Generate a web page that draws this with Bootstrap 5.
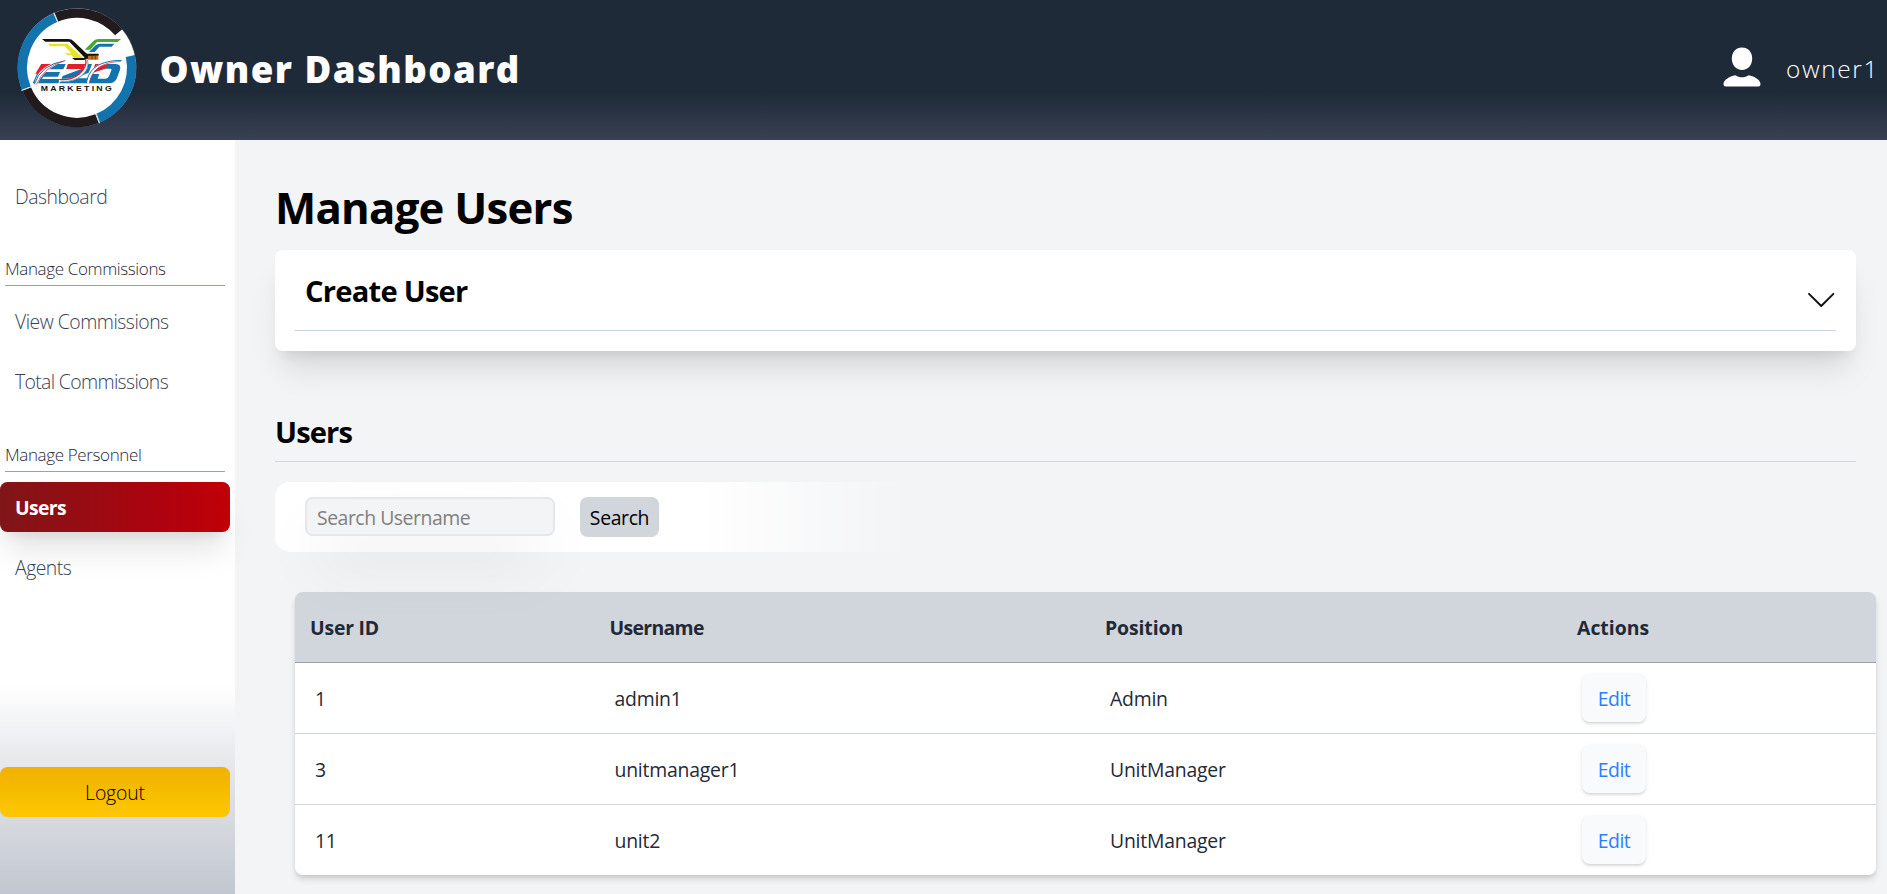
<!DOCTYPE html>
<html lang="en">
<head>
<meta charset="utf-8">
<meta name="viewport" content="width=device-width, initial-scale=1">
<title>Owner Dashboard</title>
<link href="https://cdn.jsdelivr.net/npm/bootstrap@5.3.0/dist/css/bootstrap.min.css" rel="stylesheet">
<style>
body{font-family:"Open Sans","Noto Sans",sans-serif;font-size:19.4px;letter-spacing:-.4px;background:#f3f4f6;color:#1f2937;height:100vh;overflow:hidden}
h1,h2,p{margin:0}
.topbar{height:140px;background:linear-gradient(#1f2a39 0,#1f2a39 66%,#374151 100%)}
.brand-title{font-weight:800;font-size:36.6px;letter-spacing:1.45px;line-height:54px;margin-top:-2px;margin-left:-.5px}
.user-name{font-weight:300;font-size:24.4px;letter-spacing:1.65px;margin-top:-1px}
.user-box{padding-right:8px;gap:25px}
.user-box svg{margin-top:-5px}
.sidebar{width:235px;height:754px;padding:31px 5px 0 0;background:linear-gradient(#fff 0,#fff 545px,#e5e7eb 625px,#d1d5db 700px,#c2c6d0 754px)}
.side-item{height:50px;padding:2px 0 0 15px;border-radius:7.5px;font-weight:300;letter-spacing:-.5px;color:#374151;text-decoration:none;display:flex;align-items:center;flex:none}
.side-item.on{font-weight:700;color:#fff;letter-spacing:-.65px;background:linear-gradient(90deg,#7f1618 0,#ae020e 70%,#c10007 100%);box-shadow:0 25px 31px -6px rgba(0,0,0,.1),0 10px 12.5px -7.5px rgba(0,0,0,.1)}
.side-item.tight{letter-spacing:-.65px}
.side-item+.side-item{margin-top:10px}
.side-head{height:65px;margin:0 5px 10px;border-bottom:1px solid #99a1af;font-weight:300;font-size:17px;line-height:33px;letter-spacing:-.37px;color:#1f2937}
.side-head.second{height:66px}
.logout{margin-top:175px;padding:2px 0 0;height:50px;border:0;border-radius:7.5px;background:linear-gradient(#f0b100,#fdc700);font-weight:300;letter-spacing:-.15px;color:#000}
.main-area{padding:35px 31px 0 40px;min-width:0}
.page-title{font-size:43.7px;font-weight:700;line-height:64px;letter-spacing:-.75px;color:#000;margin-bottom:11px}
.sub-title{font-size:29.1px;font-weight:700;line-height:43px;letter-spacing:-.85px;color:#000}
.create-card{height:101px;border-radius:7.5px;padding:20px;background:#fff;box-shadow:0 25px 31px -6px rgba(0,0,0,.1),0 10px 12.5px -7.5px rgba(0,0,0,.1)}
.create-head{height:61px;border-bottom:1px solid #cad5e2;padding-left:10px}
.create-head .sub-title{letter-spacing:-.75px}
.chev{margin-top:15px}
.users-head{margin-top:60px;height:51px;border-bottom:1px solid #d1d5dc}
.search-row{margin-top:20px;height:70px;border-radius:15px;padding:15px 0 0 30px;background:linear-gradient(90deg,#fff 0,#fff 27%,rgba(255,255,255,0) 40%);gap:25px}
.search-box{width:250px;height:39px;border:2px solid #e5e7eb;border-radius:7.5px;background:#f3f4f6;padding:2px 10px 0;font-size:19.4px;letter-spacing:-.47px;box-shadow:0 31px 62px -15px rgba(0,0,0,.25)}
.search-box::placeholder{color:#808080;opacity:1}
.search-btn{width:79px;height:40px;border:0;border-radius:7.5px;background:#d1d5dc;color:#000;padding:2px 0 0;letter-spacing:-.35px}
.user-panel{margin:40px -20px 0 20px;border-radius:7.5px;overflow:hidden;background:#fff;box-shadow:0 5px 7.5px -1.25px rgba(0,0,0,.14),0 2.5px 5px -2.5px rgba(0,0,0,.14)}
.user-table{width:100%;table-layout:fixed;border-collapse:separate;border-spacing:0}
.user-table th{height:71px;background:#d1d5dc;border-bottom:1px solid #99a1af;padding:2px 15px 0;font-weight:700;letter-spacing:-.2px}
.user-table th:nth-child(2){letter-spacing:-.65px}
.user-table th:nth-child(3){letter-spacing:-.1px}
.user-table th:nth-child(4){letter-spacing:0}
.user-table td{height:71px;border-bottom:1px solid #d1d5dc;padding:2px 20px 0;letter-spacing:-.22px}
.user-table td:last-child{padding-top:0}
.user-table tr:last-child td{height:70px;border-bottom:0}
.edit-btn{width:64px;height:48px;border:0;border-radius:7.5px;background:#f9fafb;color:#2b7fff;padding:2px 0 0;letter-spacing:-.45px;box-shadow:0 1.25px 3.75px rgba(0,0,0,.1),0 1.25px 2.5px -1px rgba(0,0,0,.1)}
</style>
</head>
<body>
<header class="topbar d-flex align-items-center justify-content-between">
  <div class="d-flex align-items-center">
    <svg width="160" height="140" viewBox="0 0 480 420" class="flex-shrink-0" aria-hidden="true">
      <circle cx="231" cy="203" r="178" fill="#8a8d92"/>
      <circle cx="231" cy="203" r="176.500" fill="#fff"/>
      <g fill="none" stroke-width="28">
        <path d="M168 52A164 164 0 0 1 356 97" stroke="#211b1e"/>
        <path d="M391 168A164 164 0 0 1 293 355" stroke="#1273ae"/>
        <path d="M291 356A164 164 0 0 1 80 267" stroke="#211b1e"/>
        <path d="M79 265A164 164 0 0 1 166 53" stroke="#1273ae"/>
      </g>
      <path d="M162 38L174 66M64 271L93 261M299 370L289 341" stroke="#ddd" stroke-width="3"/>
      <path d="M126 117H205Q215 117 221 124L262 163L257 176L208 125H136Z" fill="#15120d"/>
      <path d="M144 131H202L250 174H222L214 166H202L195 160H214L194 139H150Z" fill="#e7e326"/>
      <path d="M216 174H262V180H224Z" fill="#15120d"/>
      <path d="M363 117H296Q286 117 280 123L254 149H271L291 126H353Z" fill="#43aa36"/>
      <path d="M343 131H300Q292 131 287 136L267 156H284L298 140H335Z" fill="#1273ae"/>
      <path d="M254 161H296V167L266 169V178H254Z" fill="#15120d"/>
      <path d="M265 167H295V179H264Z" fill="#c76f18"/>
      <path d="M276 168V178M286 168V178" stroke="#392213" stroke-width="2"/>
      <g>
        <path d="M124 192H197L190 208H142L136 216H180L174 230H130L126 237H180L175 250H98Z" fill="#1273ae"/>
        <path d="M124 192H160L128 221H106Z" fill="#e2202c"/>
        <path d="M204 192H276L266 218L226 235H270L264 250H178L188 228L244 207H199Z" fill="#1273ae"/>
        <path d="M204 192H258L251 207H199Z" fill="#e2202c"/>
        <path d="M286 192H347Q366 192 359 212L351 234Q345 250 326 250H264L275 222H298L293 236H316Q324 236 327 229L334 211Q337 206 329 206H281Z" fill="#1273ae"/>
        <path d="M286 192H324L314 207L276 219Z" fill="#e2202c"/>
      </g>
      <path d="M102 255Q114 190 196 182Q128 207 112 255Z" fill="#fff"/>
      <path d="M103 253Q121 194 196 182" fill="none" stroke="#1273ae" stroke-width="3"/>
      <path d="M109 254Q131 201 190 184" fill="none" stroke="#e2202c" stroke-width="2"/>
      <path d="M259 177C268 216 226 247 177 240" fill="none" stroke="#fff" stroke-width="9"/>
      <path d="M257 177C264 211 223 244 178 238" fill="none" stroke="#e2202c" stroke-width="4"/>
      <path d="M262 179C273 215 232 248 184 244" fill="none" stroke="#1273ae" stroke-width="2"/>
      <path d="M365 181C300 184 270 205 263 251" fill="none" stroke="#fff" stroke-width="8"/>
      <path d="M365 181C300 182 266 204 259 250" fill="none" stroke="#1273ae" stroke-width="3"/>
      <path d="M363 184C306 187 276 207 268 250" fill="none" stroke="#e2202c" stroke-width="2"/>
      <text x="122" y="273" textLength="220" lengthAdjust="spacingAndGlyphs" letter-spacing="5" font-family="Liberation Sans, sans-serif" font-weight="700" font-size="19" fill="#15120d">MARKETING</text>
    </svg>
    <h1 class="brand-title text-white">Owner Dashboard</h1>
  </div>
  <div class="user-box d-flex align-items-center text-white">
    <svg width="38" height="40" viewBox="0 0 38 40" fill="#fff" aria-hidden="true">
      <path d="M19 .5c6 0 10.200 4.500 10.200 11S25 23 19 23 8.800 18 8.800 11.500 13 .5 19 .5Z"/>
      <path d="M12.500 28.200c3.800 2.800 9.200 2.800 13 0C32 29.500 37.500 33 37.500 37q0 2.500-2.500 2.500H3Q.5 39.500.5 37c0-4 5.500-7.500 12-8.800Z"/>
    </svg>
    <span class="user-name">owner1</span>
  </div>
</header>
<div class="d-flex">
  <nav class="sidebar d-flex flex-column flex-shrink-0">
    <a class="side-item" href="#">Dashboard</a>
    <div class="side-head d-flex align-items-end">Manage Commissions</div>
    <a class="side-item" href="#">View Commissions</a>
    <a class="side-item tight" href="#">Total Commissions</a>
    <div class="side-head second d-flex align-items-end">Manage Personnel</div>
    <a class="side-item on" href="#">Users</a>
    <a class="side-item" href="#">Agents</a>
    <button class="logout" type="button">Logout</button>
  </nav>
  <main class="main-area flex-grow-1">
    <h1 class="page-title">Manage Users</h1>
    <section class="create-card">
      <div class="create-head d-flex justify-content-between align-items-start">
        <h2 class="sub-title">Create User</h2>
        <svg class="chev" width="30" height="30" viewBox="0 0 30 30" fill="none" stroke="#111" stroke-width="1.900" stroke-linecap="round" stroke-linejoin="round" aria-hidden="true"><path d="M3 8.800L15.200 21L27.400 8.800"/></svg>
      </div>
    </section>
    <div class="users-head"><h2 class="sub-title">Users</h2></div>
    <form class="search-row d-flex align-items-start">
      <input class="search-box" type="text" placeholder="Search Username" aria-label="Search Username">
      <button class="search-btn" type="button">Search</button>
    </form>
    <div class="user-panel">
      <table class="user-table">
        <colgroup><col style="width:299.500px"><col style="width:495.500px"><col style="width:472px"><col></colgroup>
        <thead><tr><th>User ID</th><th>Username</th><th>Position</th><th>Actions</th></tr></thead>
        <tbody>
          <tr><td>1</td><td>admin1</td><td>Admin</td><td><button class="edit-btn" type="button">Edit</button></td></tr>
          <tr><td>3</td><td>unitmanager1</td><td>UnitManager</td><td><button class="edit-btn" type="button">Edit</button></td></tr>
          <tr><td>11</td><td>unit2</td><td>UnitManager</td><td><button class="edit-btn" type="button">Edit</button></td></tr>
        </tbody>
      </table>
    </div>
  </main>
</div>
<script src="https://cdn.jsdelivr.net/npm/bootstrap@5.3.0/dist/js/bootstrap.bundle.min.js"></script>
</body>
</html>
